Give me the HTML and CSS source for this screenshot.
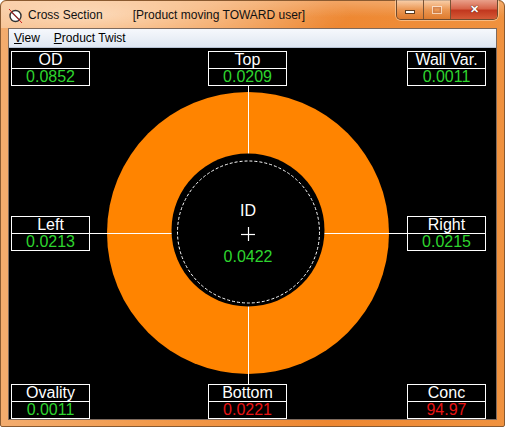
FILE: index.html
```html
<!DOCTYPE html>
<html lang="en">
  <head>
    <meta charset="UTF-8" />
    <title>Cross Section</title>
    <link rel="stylesheet" href="styles.css">
  </head>
  <body>
    <div class="window">
      <div class="titlebar">
        <svg class="app-icon" width="16" height="16" viewBox="0 0 16 16">
          <circle cx="7.5" cy="8" r="5.5" fill="#fff" stroke="#333" stroke-width="1.4" />
          <path d="M4 4.5 L11 11.5" stroke="#444" stroke-width="1.2" />
          <path d="M1 1 L14 15" stroke="#d02020" stroke-width="1" />
        </svg>
        <span class="title">Cross Section</span>
        <span class="subtitle">[Product moving TOWARD user]</span>
        <div class="controls">
          <div class="btn min"><span class="glyph-min"></span></div>
          <div class="btn max"><span class="glyph-max"></span></div>
          <div class="btn close">&#x2715;</div>
        </div>
      </div>

      <div class="client">
        <div class="menubar">
          <span class="menu"><u>V</u>iew</span>
          <span class="menu"><u>P</u>roduct Twist</span>
        </div>

        <div class="canvas">
          <svg class="drawing" width="489" height="371" viewBox="0 0 489 371">
            <circle cx="239" cy="185" r="141" fill="#ff8400" />
            <line x1="239.5" y1="37" x2="239.5" y2="336" stroke="#fff" stroke-width="1" />
            <line x1="80" y1="185.5" x2="398" y2="185.5" stroke="#fff" stroke-width="1" />
            <circle cx="239" cy="182" r="76.5" fill="#000" />
            <circle cx="239.5" cy="184" r="71" fill="none" stroke="#fff" stroke-width="1" stroke-dasharray="3 2" />
            <text x="239" y="168" class="id-label" text-anchor="middle">ID</text>
            <line x1="232" y1="186.5" x2="246" y2="186.5" stroke="#fff" stroke-width="1.2" />
            <line x1="239.5" y1="179" x2="239.5" y2="193" stroke="#fff" stroke-width="1.2" />
            <text x="239" y="214" class="id-value" text-anchor="middle">0.0422</text>
          </svg>

          <div class="grid">
            <div class="box c1 r1"><div class="label">OD</div><div class="value">0.0852</div></div>
            <div class="box c3 r1"><div class="label">Top</div><div class="value">0.0209</div></div>
            <div class="box c5 r1"><div class="label">Wall Var.</div><div class="value">0.0011</div></div>
            <div class="box c1 r2"><div class="label">Left</div><div class="value">0.0213</div></div>
            <div class="box c5 r2"><div class="label">Right</div><div class="value">0.0215</div></div>
            <div class="box c1 r3"><div class="label">Ovality</div><div class="value">0.0011</div></div>
            <div class="box c3 r3"><div class="label">Bottom</div><div class="value bad">0.0221</div></div>
            <div class="box c5 r3"><div class="label">Conc</div><div class="value bad">94.97</div></div>
          </div>
        </div>
      </div>
    </div>
  </body>
</html>
```

FILE: styles.css
```css
* {
  margin: 0;
  padding: 0;
  box-sizing: border-box;
}

body {
  width: 505px;
  height: 427px;
  overflow: hidden;
  background: #fff;
  font-family: "Liberation Sans", Arial, sans-serif;
}

.window {
  width: 505px;
  height: 427px;
  display: flex;
  flex-direction: column;
  border: 1px solid #8a5a30;
  border-radius: 6px 6px 2px 2px;
  background: linear-gradient(to right, #f3ac6e 0%, #f29a4c 30%, #ee8731 65%, #f0923f 100%);
}

.titlebar {
  height: 29px;
  display: flex;
  align-items: center;
  padding-left: 7px;
  background: radial-gradient(ellipse 260px 40px at 90px 14px, rgba(255, 235, 215, 0.75), rgba(255, 235, 215, 0) 100%),
    linear-gradient(to bottom, rgba(255, 255, 255, 0.25), rgba(255, 255, 255, 0) 60%);
  border-radius: 6px 6px 0 0;
}

.app-icon {
  flex: none;
  margin-top: 2px;
}

.title {
  margin-left: 4px;
  font-size: 12px;
  color: #111;
  margin-top: 1px;
}

.subtitle {
  margin-left: 30px;
  font-size: 12px;
  color: #111;
  margin-top: 1px;
}

.controls {
  margin-left: auto;
  margin-right: 6px;
  align-self: flex-start;
  display: flex;
  margin-top: -1px;
  border: 1px solid #6e4a2e;
  border-top: none;
  border-radius: 0 0 5px 5px;
  overflow: hidden;
  box-shadow: 0 0 0 1px rgba(255, 230, 200, 0.5);
}

.btn {
  height: 19px;
  display: flex;
  align-items: center;
  justify-content: center;
}

.btn.min,
.btn.max {
  width: 27px;
  border-right: 1px solid #7a5436;
  background: linear-gradient(to bottom, rgba(255, 240, 225, 0.55), rgba(230, 150, 90, 0.5) 50%, rgba(210, 110, 40, 0.55) 100%);
}

.glyph-min {
  width: 10px;
  height: 4px;
  margin-top: 5px;
  background: #fff;
  border: 1px solid #5a3a20;
}

.glyph-max {
  width: 10px;
  height: 8px;
  border: 1px solid rgba(255, 255, 255, 0.6);
  box-shadow: inset 0 0 0 1.5px rgba(200, 120, 70, 0.7);
}

.btn.close {
  width: 46px;
  color: #fff;
  font-size: 11px;
  font-weight: bold;
  text-shadow: 0 0 1px #5a1a10, 0 0 1px #5a1a10;
  background: linear-gradient(to bottom, #e9a08a 0%, #d8654a 45%, #c2381f 55%, #d55a36 100%);
}

.client {
  flex: 1;
  margin: 0 7px 6px 7px;
  border: 1px solid #7d6a5e;
  display: flex;
  flex-direction: column;
  background: #000;
}

.menubar {
  height: 19px;
  display: flex;
  align-items: center;
  gap: 14px;
  padding-left: 5px;
  font-size: 12px;
  color: #000;
  background: linear-gradient(to bottom, #f6f8fc, #dfe7f2);
  border-bottom: 1px solid #b6c2d4;
}

.canvas {
  position: relative;
  flex: 1;
  background: #000;
}

.drawing {
  position: absolute;
  left: 0;
  top: 0;
}

.id-label {
  fill: #fff;
  font-family: "Liberation Sans", Arial, sans-serif;
  font-size: 16px;
}

.id-value {
  fill: #2ed52e;
  font-family: "Liberation Sans", Arial, sans-serif;
  font-size: 16px;
}

.grid {
  position: relative;
  display: grid;
  grid-template-columns: 79px 118px 79px 120px 79px;
  grid-template-rows: 35px 130px 35px 133px 35px;
  padding: 3px 0 0 2px;
}

.c1 { grid-column: 1; }
.c3 { grid-column: 3; }
.c5 { grid-column: 5; }
.r1 { grid-row: 1; }
.r2 { grid-row: 3; }
.r3 { grid-row: 5; }

.box {
  border: 1px solid #fff;
  background: #000;
  display: flex;
  flex-direction: column;
  font-size: 16px;
  line-height: 16px;
  text-align: center;
}

.label {
  height: 17px;
  color: #fff;
  border-bottom: 1px solid #fff;
}

.value {
  height: 16px;
  color: #2ed52e;
}

.value.bad {
  color: #e81414;
}
```
